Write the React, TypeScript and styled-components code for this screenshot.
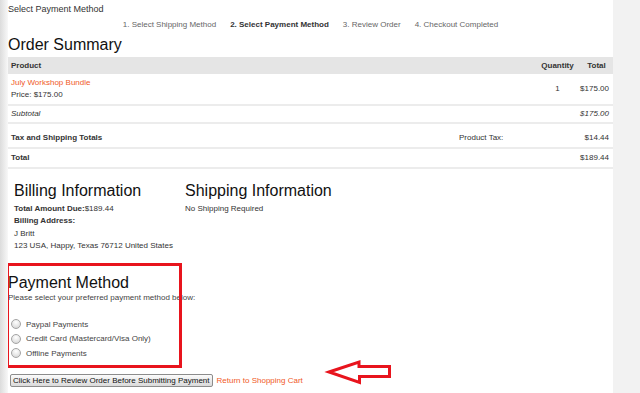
import React from 'react';
import styled, { createGlobalStyle } from 'styled-components';

const GlobalStyle = createGlobalStyle`
  html, body {
    margin: 0;
    padding: 0;
  }
  body {
    font-family: 'Liberation Sans', Arial, sans-serif;
    color: #333;
    background: linear-gradient(90deg, #dcdcdc 0px, #f8f8f8 8px, #f2f2f2 8px);
    min-height: 393px;
  }
`;

const Page = styled.div`
  position: relative;
  width: 605px;
  margin-left: 8px;
  min-height: 393px;
  background: #fff;
  overflow: hidden;
`;

const TopTitle = styled.div`
  padding-top: 4px;
  font-size: 9px;
  line-height: 11px;
  color: #333;
`;

const Steps = styled.div`
  display: flex;
  justify-content: center;
  gap: 14px;
  margin-top: 5px;
  font-size: 8px;
  line-height: 10px;
`;

const Step = styled.span<{ $active?: boolean }>`
  color: ${(p) => (p.$active ? '#333' : '#666')};
  font-weight: ${(p) => (p.$active ? 700 : 400)};
`;

const Heading = styled.h2<{ $top: number }>`
  margin: ${(p) => p.$top}px 0 0;
  font-size: 16px;
  line-height: 18px;
  font-weight: 400;
  color: #111;
`;

const Table = styled.div`
  margin-top: 3px;
  font-size: 8px;
  line-height: 12px;
`;

const Row = styled.div<{ $head?: boolean; $pt?: number; $pb?: number }>`
  display: grid;
  grid-template-columns: 1fr 79px 45px 33px;
  align-items: center;
  padding: ${(p) => p.$pt ?? 3}px 0 ${(p) => p.$pb ?? 3}px;
  background: ${(p) => (p.$head ? '#e5e5e5' : '#fff')};
  border-bottom: ${(p) => (p.$head ? 'none' : '2px solid #ececec')};
  font-weight: ${(p) => (p.$head ? 700 : 400)};
  height: ${(p) => (p.$head ? '17px' : 'auto')};
  box-sizing: border-box;
`;

const Cell = styled.div<{ $align?: 'left' | 'center' | 'right'; $bold?: boolean; $italic?: boolean }>`
  text-align: ${(p) => p.$align ?? 'left'};
  font-weight: ${(p) => (p.$bold ? 700 : 'inherit')};
  font-style: ${(p) => (p.$italic ? 'italic' : 'normal')};
  padding: ${(p) => (p.$align === 'right' ? '0 4px 0 0' : p.$align === 'center' ? '0' : '0 0 0 3px')};
  white-space: nowrap;
`;

const ProductLink = styled.a`
  display: block;
  color: #f0591f;
  text-decoration: none;
`;

const InfoRow = styled.div`
  display: flex;
  margin-top: 13px;
  padding-left: 6px;
`;

const InfoCol = styled.div<{ $width?: number }>`
  width: ${(p) => (p.$width ? `${p.$width}px` : 'auto')};
  flex: ${(p) => (p.$width ? 'none' : '1')};
`;

const InfoLines = styled.div`
  margin-top: 3px;
  font-size: 8px;
  line-height: 12.3px;
  color: #333;
`;

const Label = styled.b`
  font-weight: 700;
`;

const Payment = styled.div`
  margin-top: 22px;
`;

const Hint = styled.div`
  font-size: 8px;
  line-height: 12px;
  color: #444;
`;

const Options = styled.div`
  margin-top: 13px;
  display: flex;
  flex-direction: column;
`;

const Option = styled.label`
  display: flex;
  align-items: center;
  gap: 5px;
  height: 14.5px;
  padding-left: 3px;
  font-size: 8px;
  color: #444;
`;

const Radio = styled.input`
  appearance: none;
  margin: 0;
  width: 10px;
  height: 10px;
  border-radius: 50%;
  border: 1px solid #a4a4a4;
  box-sizing: border-box;
  background: radial-gradient(circle at 50% 30%, #ffffff 0%, #e4e4e4 60%, #cfcfcf 100%);
`;

const Actions = styled.div`
  display: flex;
  align-items: center;
  gap: 4px;
  margin-top: 13px;
  padding-left: 2px;
`;

const ReviewButton = styled.button`
  height: 13px;
  padding: 0 2px;
  font-family: 'Liberation Sans', Arial, sans-serif;
  font-size: 8px;
  line-height: 11px;
  color: #111;
  border: 1px solid #8c8c8c;
  border-radius: 2px;
  background: linear-gradient(#fbfbfb, #dadada);
  white-space: nowrap;
`;

const CartLink = styled.a`
  font-size: 8px;
  color: #f0591f;
  text-decoration: none;
`;

const Highlight = styled.div`
  position: absolute;
  left: -2px;
  top: 263px;
  width: 176px;
  height: 105px;
  border: 3px solid #e8141d;
  box-sizing: border-box;
  pointer-events: none;
`;

const Arrow = styled.svg`
  position: absolute;
  left: 315px;
  top: 355px;
  width: 72px;
  height: 36px;
  overflow: visible;
`;

const products = [{ name: 'July Workshop Bundle', price: '$175.00', qty: '1', total: '$175.00' }];

export default function App() {
  return (
    <>
      <GlobalStyle />
      <Page>
        <TopTitle>Select Payment Method</TopTitle>
        <Steps>
          <Step>1. Select Shipping Method</Step>
          <Step $active>2. Select Payment Method</Step>
          <Step>3. Review Order</Step>
          <Step>4. Checkout Completed</Step>
        </Steps>

        <Heading $top={6}>Order Summary</Heading>
        <Table>
          <Row $head $pt={0} $pb={0}>
            <Cell>Product</Cell>
            <Cell />
            <Cell $align="center">Quantity</Cell>
            <Cell $align="center">Total</Cell>
          </Row>
          {products.map((p) => (
            <Row key={p.name}>
              <Cell>
                <ProductLink href="#">{p.name}</ProductLink>
                Price: {p.price}
              </Cell>
              <Cell />
              <Cell $align="center">{p.qty}</Cell>
              <Cell $align="right">{p.total}</Cell>
            </Row>
          ))}
          <Row $pt={2} $pb={2}>
            <Cell $italic>Subtotal</Cell>
            <Cell />
            <Cell />
            <Cell $align="right" $italic>$175.00</Cell>
          </Row>
          <Row $pt={8} $pb={3}>
            <Cell $bold>Tax and Shipping Totals</Cell>
            <Cell>Product Tax:</Cell>
            <Cell />
            <Cell $align="right">$14.44</Cell>
          </Row>
          <Row>
            <Cell $bold>Total</Cell>
            <Cell />
            <Cell />
            <Cell $align="right">$189.44</Cell>
          </Row>
        </Table>

        <InfoRow>
          <InfoCol $width={171}>
            <Heading $top={0}>Billing Information</Heading>
            <InfoLines>
              <div>
                <Label>Total Amount Due:</Label>$189.44
              </div>
              <div>
                <Label>Billing Address:</Label>
              </div>
              <div>J Britt</div>
              <div>123 USA, Happy, Texas 76712 United States</div>
            </InfoLines>
          </InfoCol>
          <InfoCol>
            <Heading $top={0}>Shipping Information</Heading>
            <InfoLines>No Shipping Required</InfoLines>
          </InfoCol>
        </InfoRow>

        <Payment>
          <Heading $top={0}>Payment Method</Heading>
          <Hint>Please select your preferred payment method below:</Hint>
          <Options>
            <Option>
              <Radio type="radio" name="pm" />
              Paypal Payments
            </Option>
            <Option>
              <Radio type="radio" name="pm" />
              Credit Card (Mastercard/Visa Only)
            </Option>
            <Option>
              <Radio type="radio" name="pm" />
              Offline Payments
            </Option>
          </Options>
          <Actions>
            <ReviewButton>Click Here to Review Order Before Submitting Payment</ReviewButton>
            <CartLink href="#">Return to Shopping Cart</CartLink>
          </Actions>
        </Payment>

        <Highlight />
        <Arrow viewBox="0 0 72 36">
          <polygon
            points="6,17 36,7 36,11.5 66.5,11.5 66.5,21.5 36.5,21.5 36.5,27.5"
            fill="none"
            stroke="#e8141d"
            strokeWidth="3"
            strokeLinejoin="miter"
          />
        </Arrow>
      </Page>
    </>
  );
}
